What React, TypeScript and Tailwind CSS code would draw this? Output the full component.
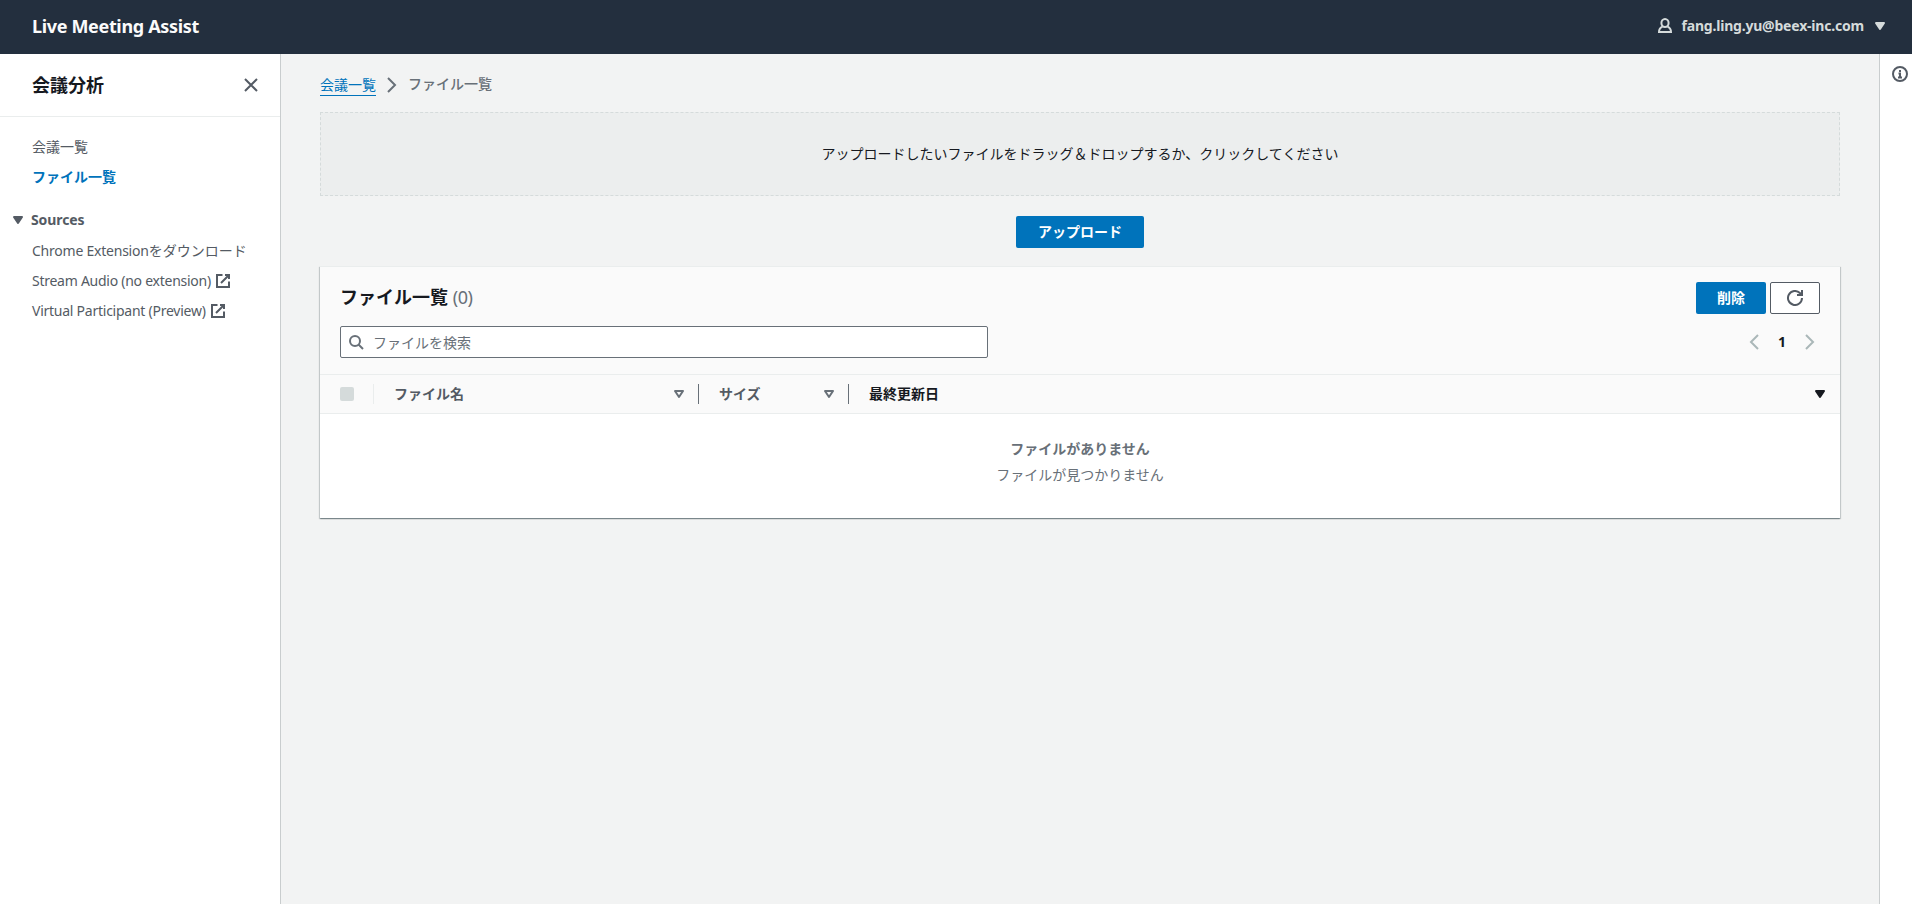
import type { ReactNode } from 'react';
import clsx from 'clsx';

interface IconProps {
  className?: string;
  children: ReactNode;
}

function Icon({ className, children }: IconProps) {
  return (
    <svg
      viewBox="0 0 16 16"
      className={clsx('size-4 shrink-0 fill-none stroke-current stroke-2', className)}
      aria-hidden="true"
    >
      {children}
    </svg>
  );
}

const CaretDown = ({ className }: { className?: string }) => (
  <Icon className={className}>
    <path d="M4 5h8l-4 6z" className="fill-current" strokeLinejoin="round" />
  </Icon>
);

const SortIcon = () => (
  <Icon className="text-[#687078]">
    <path d="M4 5h8l-4 6z" strokeLinejoin="round" />
  </Icon>
);

const ExternalIcon = () => (
  <Icon className="ml-1">
    <path d="M14 8.5V14H2V2h5.5" />
    <path d="M10 2h4v4M6 10l7.5-7.5" />
  </Icon>
);

const ChevronRight = ({ className }: { className?: string }) => (
  <Icon className={className}>
    <path d="m4 1 7 7-7 7" />
  </Icon>
);

const ChevronLeft = ({ className }: { className?: string }) => (
  <Icon className={className}>
    <path d="M12 1 5 8l7 7" />
  </Icon>
);

function TopBar() {
  return (
    <header className="flex h-[54px] shrink-0 items-center justify-between bg-[#232f3e] pr-6 pb-[2px] pl-8">
      <span className="text-[18px] leading-[22px] font-bold tracking-[-0.34px] text-[#fbfbfb]">Live Meeting Assist</span>
      <button className="flex items-center text-sm font-bold text-[#d5dbdb]">
        <Icon>
          <ellipse cx="8" cy="5" rx="3.6" ry="4" />
          <path d="M5.500 8.600C3.300 9.600 2 11.600 2 14h12c0-2.400-1.300-4.400-3.500-5.400" />
        </Icon>
        <span className="ml-2 leading-[22px] tracking-[-0.2px]">fang.ling.yu@beex-inc.com</span>
        <CaretDown className="ml-2" />
      </button>
    </header>
  );
}

function SideNav() {
  return (
    <nav className="relative w-[280px] shrink-0 bg-white text-sm leading-[22px] text-[#545b64] shadow-[1px_0_0_0_#c9cdce]">
      <div className="flex h-[63px] items-center justify-between border-b border-[#eaeded] pr-[21px] pl-8">
        <h2 className="text-[18px] leading-[22px] font-bold text-[#16191f]">会議分析</h2>
        <button>
          <Icon>
            <path d="m2 2 12 12M14 2 2 14" />
          </Icon>
        </button>
      </div>

      <ul className="space-y-2 pt-[19px] pl-8">
        <li>会議一覧</li>
        <li className="font-bold text-[#0073bb]">ファイル一覧</li>
      </ul>

      {/* Sources group */}
      <div className="mt-[21px] flex items-center pl-[10px] font-bold">
        <CaretDown />
        <span className="ml-[5px] tracking-[-0.1px]">Sources</span>
      </div>
      <ul className="mt-[9px] space-y-2 pl-8">
        <li>
          <span className="tracking-[-0.23px]">Chrome Extension</span>をダウンロード
        </li>
        <li className="flex items-center">
          <span className="tracking-[-0.26px]">Stream Audio (no extension)</span>
          <ExternalIcon />
        </li>
        <li className="flex items-center">
          <span className="tracking-[-0.25px]">Virtual Participant (Preview)</span>
          <ExternalIcon />
        </li>
      </ul>
    </nav>
  );
}

interface ColumnProps {
  label: string;
  className?: string;
  active?: boolean;
}

function Column({ label, className, active = false }: ColumnProps) {
  return (
    <div className={clsx('flex h-5 items-center justify-between pl-5 font-bold', className)}>
      <span className={active ? 'text-[#16191f]' : 'text-[#545b64]'}>{label}</span>
      {active ? <CaretDown className="text-[#16191f]" /> : <SortIcon />}
    </div>
  );
}

function FileTable() {
  return (
    <section className="mt-[18px] h-[252px] bg-white shadow-[0_1px_1px_0_rgba(0,28,36,0.3),1px_1px_1px_0_rgba(0,28,36,0.15),-1px_1px_1px_0_rgba(0,28,36,0.15)]">
      <div className="h-[109px] border-y border-[#eaeded] bg-[#fafafa] px-5 pt-[15px]">
        <div className="flex h-8 items-center justify-between">
          <h2 className="pb-[2px] text-[18px] leading-[22px] font-bold text-[#16191f]">
            ファイル一覧 <span className="font-normal tracking-[-0.4px] text-[#687078]">(0)</span>
          </h2>
          <div className="flex gap-1">
            <button className="h-8 w-[70px] rounded-xs bg-[#0073bb] text-sm font-bold text-white">削除</button>
            <button className="flex h-8 w-[50px] items-center justify-center rounded-xs border border-[#545b64] bg-white text-[#545b64]">
              <Icon>
                <path d="M15 8a7 7 0 1 1-2.100-5l1.600 1.600" />
                <path d="M15 0v5h-5" />
              </Icon>
            </button>
          </div>
        </div>
        <div className="mt-3 flex items-center justify-between">
          <div className="flex h-8 w-[648px] items-center rounded-xs border border-[#687078] bg-white pl-[7px] text-[#687078]">
            <Icon>
              <circle cx="7" cy="7" r="5" />
              <path d="m10.500 10.500 4.500 4.500" />
            </Icon>
            <input
              placeholder="ファイルを検索"
              className="ml-[9px] flex-1 pt-px text-sm leading-[22px] outline-none placeholder:text-[#687078]"
            />
          </div>
          <div className="flex items-center pr-[2px] text-[#aab7b8]">
            <ChevronLeft />
            <span className="w-10 text-center text-sm leading-[22px] font-bold text-[#16191f]">1</span>
            <ChevronRight />
          </div>
        </div>
      </div>

      {/* Column headers */}
      <div className="flex h-[39px] items-center border-b border-[#eaeded] bg-[#fafafa] pl-5 text-sm">
        <div className="flex h-5 w-[34px] items-center border-r border-[#eaeded]">
          <span className="size-[14px] rounded-xs bg-[#d5dbdb]" />
        </div>
        <Column label="ファイル名" className="w-[325px] border-r border-[#687078] pr-[11px]" />
        <Column label="サイズ" className="w-[150px] border-r border-[#687078] pr-[11px]" />
        <Column label="最終更新日" className="flex-1 pr-3" active />
      </div>

      <div className="pt-[22px] text-center text-sm text-[#687078]">
        <p className="leading-[26px] font-bold">ファイルがありません</p>
        <p className="leading-[26px]">ファイルが見つかりません</p>
      </div>
    </section>
  );
}

export default function App() {
  return (
    <div
      lang="ja"
      className="flex h-screen flex-col overflow-hidden bg-[#f2f3f3] font-['Noto_Sans','Noto_Sans_CJK_JP',sans-serif] text-[#16191f]"
    >
      <TopBar />
      <div className="flex min-h-0 flex-1">
        <SideNav />

        <main className="min-w-0 flex-1 px-10 pt-5 text-sm">
          <div className="flex h-[22px] items-center text-[#687078]">
            <a className="h-[21px] border-b border-[#0073bb] leading-[20px] text-[#0073bb]">会議一覧</a>
            <ChevronRight className="mx-2" />
            <span className="pb-[2px] leading-[20px] font-medium">ファイル一覧</span>
          </div>

          {/* Drop area */}
          <div className="mt-4 flex h-[84px] items-center justify-center border border-dashed border-[#d5dbdb] bg-[#eceeee]">
            <p className="text-sm">
              アップロードしたいファイルをドラッグ＆ドロップするか、クリックしてください
            </p>
          </div>

          <div className="mt-5 flex justify-center">
            <button className="h-8 w-32 rounded-xs bg-[#0073bb] text-sm font-bold text-white">アップロード</button>
          </div>

          <FileTable />
        </main>

        <aside className="relative w-8 shrink-0 bg-white pt-3 pl-3 text-[#545b64] shadow-[-1px_0_0_0_#c9cdce]">
          <Icon>
            <circle cx="8" cy="8" r="7" />
            <path d="M8 4v2M6.500 7.500H8V11M6 11.500h4" />
          </Icon>
        </aside>
      </div>
    </div>
  );
}
